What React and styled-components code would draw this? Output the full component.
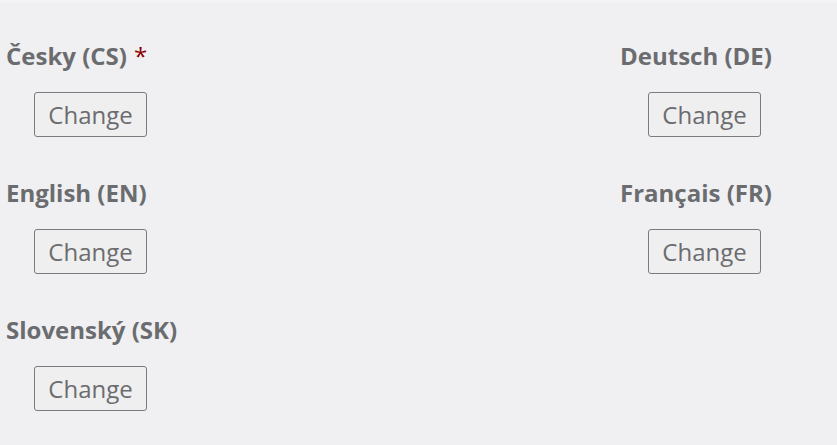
import React from "react";
import styled, { createGlobalStyle } from "styled-components";

const Global = createGlobalStyle`
  html, body { margin: 0; padding: 0; background: #f0f0f2; }
  body { font-family: "Open Sans", "Liberation Sans", sans-serif; }
`;

const Page = styled.div`
  width: 837px;
  height: 445px;
  box-sizing: border-box;
  border-top: 3px solid #f3f3f5;
  padding: 37px 0 0 6px;
  display: grid;
  grid-template-columns: 614px 1fr;
  row-gap: 40px;
  align-content: start;
`;

const Field = styled.div`
  display: flex;
  flex-direction: column;
  align-items: flex-start;
  gap: 20px;
`;

const Label = styled.div`
  font-size: 24px;
  line-height: 32px;
  font-weight: 700;
  color: #6b6c6f;
`;

const Required = styled.span`
  color: #8b0000;
  font-weight: 400;
  margin-left: 7px;
`;

const ChangeButton = styled.button`
  margin-left: 28px;
  height: 45px;
  width: 113px;
  box-sizing: border-box;
  padding: 0;
  background: #efefef;
  border: 1px solid #7b7b7d;
  border-radius: 3px;
  font-family: "Open Sans", "Liberation Sans", sans-serif;
  font-size: 24px;
  color: #6b6c6f;
`;

const langs = [
  { label: "Česky (CS)", required: true },
  { label: "Deutsch (DE)" },
  { label: "English (EN)" },
  { label: "Français (FR)" },
  { label: "Slovenský (SK)" },
];

export default function App() {
  return (
    <>
      <Global />
      <Page>
        {langs.map((l) => (
          <Field key={l.label}>
            <Label>
              {l.label}
              {l.required && <Required>*</Required>}
            </Label>
            <ChangeButton>Change</ChangeButton>
          </Field>
        ))}
      </Page>
    </>
  );
}
